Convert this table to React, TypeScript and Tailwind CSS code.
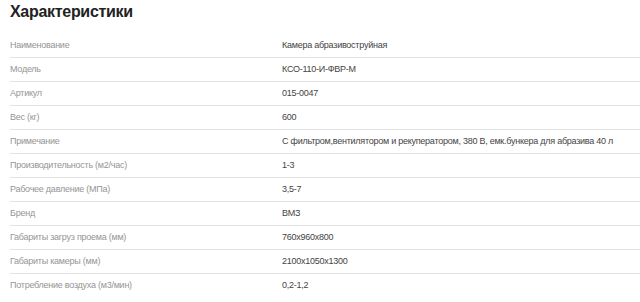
import React from 'react';

const specs: [string, string][] = [
  ['Наименование', 'Камера абразивоструйная'],
  ['Модель', 'КСО-110-И-ФВР-М'],
  ['Артикул', '015-0047'],
  ['Вес (кг)', '600'],
  ['Примечание', 'С фильтром,вентилятором и рекуператором, 380 В, емк.бункера для абразива 40 л'],
  ['Производительность (м2/час)', '1-3'],
  ['Рабочее давление (МПа)', '3,5-7'],
  ['Бренд', 'ВМЗ'],
  ['Габариты загруз проема (мм)', '760x960x800'],
  ['Габариты камеры (мм)', '2100x1050x1300'],
  ['Потребление воздуха (м3/мин)', '0,2-1,2'],
];

export default function App() {
  return (
    <div className="w-[640px] h-[302px] overflow-hidden bg-white pl-[10px] font-['Liberation_Sans',Arial,sans-serif]">
      <h2 className="h-[34px] text-[16px] leading-[24px] font-bold tracking-[-0.3px] text-[#222]">Характеристики</h2>
      <div>
        {specs.map(([label, value], i) => (
          <div
            key={label}
            className={`flex items-center h-[24px] text-[9px] tracking-[-0.25px] ${i < specs.length - 1 ? 'border-b border-[#e2e2e2]' : ''}`}
          >
            <div className="w-[272px] shrink-0 text-[#959595]">{label}</div>
            <div className="whitespace-nowrap text-[#444]">{value}</div>
          </div>
        ))}
      </div>
    </div>
  );
}
